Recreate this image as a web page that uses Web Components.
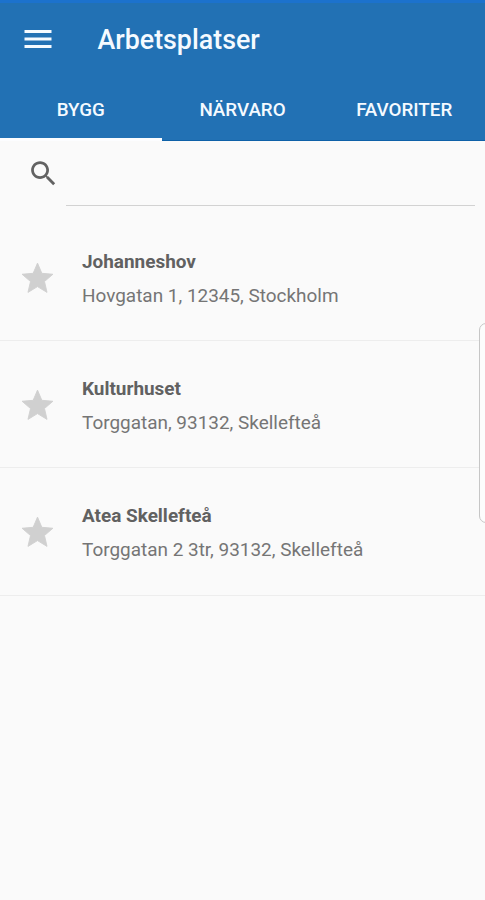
<!DOCTYPE html>
<html lang="sv">
<head>
<meta charset="utf-8">
<title>Arbetsplatser</title>
<style>
    body{
        margin:0;
        background:#fafafa;
        font-family:Roboto, sans-serif;
        overflow:hidden;
    }
</style>
</head>
<body>
<arbets-app>
    <app-bar slot="header">Arbetsplatser</app-bar>
    <tab-bar slot="header">
        <tab-item active>BYGG</tab-item>
        <tab-item>NÄRVARO</tab-item>
        <tab-item>FAVORITER</tab-item>
    </tab-bar>
    <search-field></search-field>
    <work-place name="Johanneshov">Hovgatan 1, 12345, Stockholm</work-place>
    <work-place name="Kulturhuset">Torggatan, 93132, Skellefteå</work-place>
    <work-place name="Atea Skellefteå">Torggatan 2 3tr, 93132, Skellefteå</work-place>
</arbets-app>

<script>
function createTemplate(html){
    const template = document.createElement('template');
    template.innerHTML = html;
    return template;
}

class BaseElement extends HTMLElement{
    constructor(){
        super();
        this.attachShadow({mode:'open'});
        this.shadowRoot.appendChild(this.constructor.template.content.cloneNode(true));
    }
}

class ArbetsApp extends BaseElement{
    static template = createTemplate(`
<style>
    :host{
        display:block;
        position:relative;
        height:900px;
        overflow:hidden;
    }
    header{
        box-sizing:border-box;
        display:flex;
        flex-direction:column;
        height:141px;
        border-top:3px solid #1c72cd;
        background:#2271b4;
        color:#f5faff;
    }
    /* edge handle, lies over the list */
    .handle{
        position:absolute;
        box-sizing:border-box;
        left:479px;
        top:323px;
        width:20px;
        height:200px;
        border:1px solid #c6c6c6;
        border-radius:7px;
        background:#fcfcfc;
    }
</style>
<header><slot name="header"></slot></header>
<main><slot></slot></main>
<div class="handle"></div>
`);
}

class AppBar extends BaseElement{
    static template = createTemplate(`
<style>
    :host{
        display:flex;
        align-items:center;
        height:72px;
        padding:0 0 3px 20px;
        font-size:26.8px;
        font-weight:500;
    }
    svg{
        width:36px;
        height:36px;
        margin-right:41.5px;
    }
    span{
        padding-top:2px;
    }
</style>
<svg viewBox="0 0 24 24" fill="currentColor"><path d="M3 18h18v-2H3v2zm0-5h18v-2H3v2zm0-7v2h18V6H3z"/></svg>
<span><slot></slot></span>
`);
}

class TabBar extends BaseElement{
    static template = createTemplate(`
<style>
    :host{
        display:flex;
        flex:1;
    }
</style>
<slot></slot>
`);
}

class TabItem extends BaseElement{
    static template = createTemplate(`
<style>
    :host{
        box-sizing:border-box;
        display:flex;
        flex:1 1 0;
        justify-content:center;
        padding-top:21px;
        border-bottom:1px solid #0e61a8;
        font-size:18.8px;
        line-height:22px;
        font-weight:500;
    }
    :host([active]){
        border-bottom:3px solid #fcfdff;
    }
</style>
<slot></slot>
`);
}

class SearchField extends BaseElement{
    static template = createTemplate(`
<style>
    :host{
        display:flex;
        height:73px;
        padding:0 10px 0 27px;
    }
    svg{
        width:33px;
        height:33px;
        margin-top:16px;
        color:#626262;
    }
    input{
        box-sizing:border-box;
        flex:1;
        min-width:0;
        height:65px;
        margin-left:6px;
        padding:0;
        border:0;
        border-bottom:1px solid #d2d2d2;
        background:none;
        font:18px Roboto, sans-serif;
        outline:none;
    }
</style>
<svg viewBox="0 0 24 24" fill="currentColor"><path d="M15.5 14h-.79l-.28-.27C15.41 12.59 16 11.11 16 9.5 16 5.91 13.09 3 9.5 3S3 5.91 3 9.5 5.91 16 9.5 16c1.61 0 3.09-.59 4.23-1.57l.27.28v.79l5 4.99L20.49 19l-4.99-5zm-6 0C7.01 14 5 11.99 5 9.5S7.01 5 9.5 5 14 7.01 14 9.5 11.99 14 9.5 14z"/></svg>
<input type="text">
`);
}

class WorkPlace extends BaseElement{
    static template = createTemplate(`
<style>
    :host{
        box-sizing:border-box;
        display:flex;
        align-items:center;
        height:127.2px;
        padding:2px 0 0 19px;
        border-bottom:1px solid #ededed;
    }
    svg{
        width:37px;
        height:37px;
        margin-right:26px;
        color:#d0d0d0;
    }
    .text{
        display:flex;
        flex-direction:column;
        gap:11px;
        padding-top:1px;
        font-size:18.95px;
        line-height:23px;
        color:#757575;
    }
    .name{
        font-weight:700;
        color:#616161;
    }
</style>
<svg viewBox="0 0 24 24" fill="currentColor" stroke="currentColor" stroke-width=".6" stroke-linejoin="round"><path d="M12 17.27L18.18 21l-1.64-7.03L22 9.24l-7.19-.61L12 2 9.19 8.63 2 9.24l5.46 4.73L5.82 21z"/></svg>
<div class="text">
    <span class="name"></span>
    <span><slot></slot></span>
</div>
`);

    connectedCallback(){
        this.shadowRoot.querySelector('.name').textContent = this.getAttribute('name');
    }
}

customElements.define('arbets-app', ArbetsApp);
customElements.define('app-bar', AppBar);
customElements.define('tab-bar', TabBar);
customElements.define('tab-item', TabItem);
customElements.define('search-field', SearchField);
customElements.define('work-place', WorkPlace);
</script>
</body>
</html>
